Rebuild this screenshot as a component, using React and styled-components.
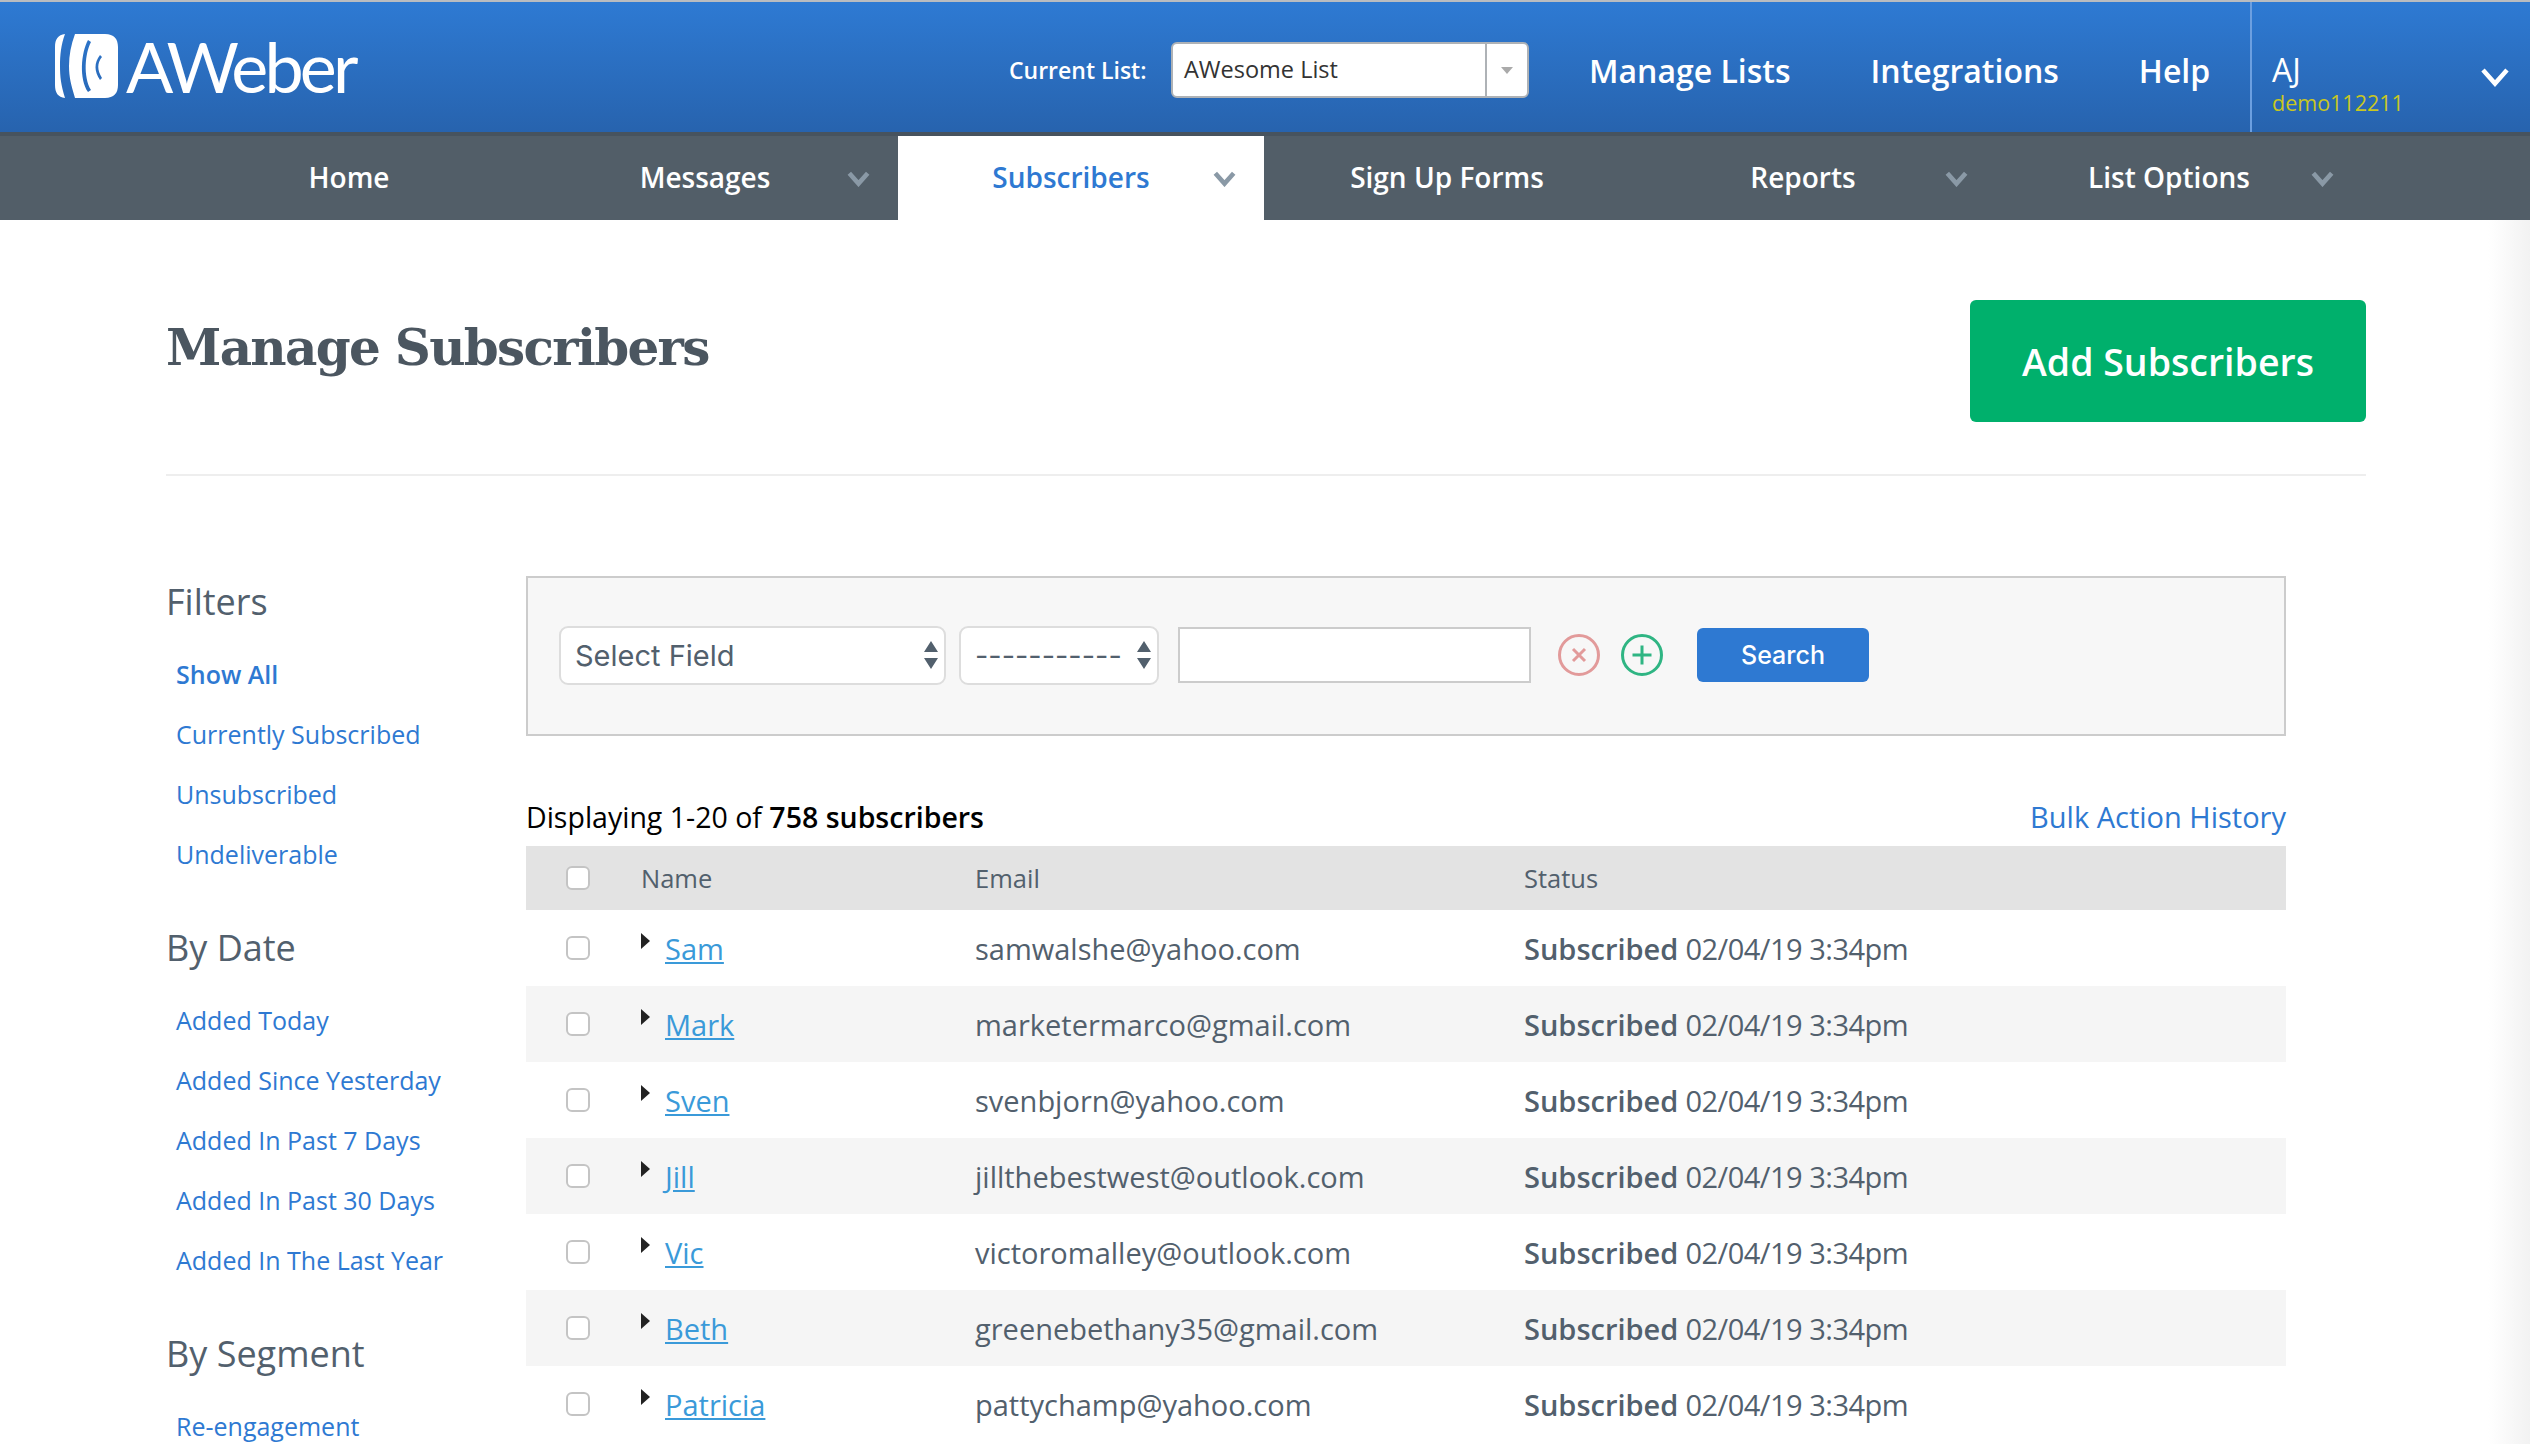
import React from 'react';
import styled, { createGlobalStyle } from 'styled-components';

const GlobalStyle = createGlobalStyle`
  html, body {
    margin: 0;
    padding: 0;
    height: 1444px;
    overflow: hidden;
    background: #fff;
  }
  body {
    font-family: 'Open Sans', 'Noto Sans', sans-serif;
    font-stretch: 88%;
  }
`;

const filterLinks = ['Show All', 'Currently Subscribed', 'Unsubscribed', 'Undeliverable'];
const dateLinks = ['Added Today', 'Added Since Yesterday', 'Added In Past 7 Days', 'Added In Past 30 Days', 'Added In The Last Year'];
const navItems = [
  { id: 1, label: 'Home' },
  { id: 2, label: 'Messages', menu: true },
  { id: 3, label: 'Subscribers', menu: true, active: true },
  { id: 4, label: 'Sign Up Forms' },
  { id: 5, label: 'Reports', menu: true },
  { id: 6, label: 'List Options', menu: true },
];
const subscribers = [
  { id: 1, name: 'Sam', email: 'samwalshe@yahoo.com' },
  { id: 2, name: 'Mark', email: 'marketermarco@gmail.com' },
  { id: 3, name: 'Sven', email: 'svenbjorn@yahoo.com' },
  { id: 4, name: 'Jill', email: 'jillthebestwest@outlook.com' },
  { id: 5, name: 'Vic', email: 'victoromalley@outlook.com' },
  { id: 6, name: 'Beth', email: 'greenebethany35@gmail.com' },
  { id: 7, name: 'Patricia', email: 'pattychamp@yahoo.com' },
];

function Chevron({ width = 23, color = '#8a99a6', stroke = 4 }) {
  return (
    <svg width={width} height={width * 0.7} viewBox="0 0 20 14" fill="none">
      <path d="M2 2 L10 11 L18 2" stroke={color} strokeWidth={stroke} />
    </svg>
  );
}

function Arrows() {
  return (
    <svg width="14" height="28" viewBox="0 0 14 28">
      <path d="M7 0 L14 11 L0 11 Z M7 28 L14 17 L0 17 Z" fill="#52606d" />
    </svg>
  );
}

export default function App() {
  return (
    <Page>
      <GlobalStyle />
      <Header>
        <Logo>
          <svg width="64" height="66" viewBox="0 0 64 66">
            <path d="M10 1 C3 2 0 6 0 14 L0 52 C0 60 3 64 10 65 C6 52 5 44 5 33 C5 22 6 12 10 1 Z" fill="#fff" />
            <path
              fillRule="evenodd"
              fill="#fff"
              d="M20 1 L50 1 C59 1 63 6 63 14 L63 52 C63 60 59 65 50 65 L20 65 C16 52 14 44 14 33 C14 22 16 12 20 1 Z M33 7 C26 20 24 46 33 59 L36 57 C28 44 30 20 36 9 Z M45 22 C39 30 39 38 45 47 L47 45 C42 37 42 30 47 24 Z"
            />
          </svg>
          <LogoText>AWeber</LogoText>
        </Logo>
        <ListLabel>Current List:</ListLabel>
        <ListSelect>
          <ListValue>AWesome List</ListValue>
          <ListCaret><i /></ListCaret>
        </ListSelect>
        <TopLinks>
          <TopLink>Manage Lists</TopLink>
          <TopLink>Integrations</TopLink>
          <TopLink>Help</TopLink>
        </TopLinks>
        <Account>
          <AccountText>
            <AccountName>AJ</AccountName>
            <AccountId>demo112211</AccountId>
          </AccountText>
          <AccountChevron>
            <Chevron width={30} color="#fff" stroke={3} />
          </AccountChevron>
        </Account>
      </Header>

      <NavBar>
        {navItems.map(item => (
          <NavItem key={item.id} $active={item.active} $menu={item.menu}>
            {item.label}
            {item.menu && (
              <NavChevron>
                <Chevron />
              </NavChevron>
            )}
          </NavItem>
        ))}
      </NavBar>

      <Content>
        <TitleRow>
          <Title>Manage Subscribers</Title>
          <AddButton>Add Subscribers</AddButton>
        </TitleRow>

        <Columns>
          <Sidebar>
            <SideHeading>Filters</SideHeading>
            <SideList>
              {filterLinks.map((link, i) => (
                <SideLink key={link} $current={i === 0}>{link}</SideLink>
              ))}
            </SideList>
            <SideHeading>By Date</SideHeading>
            <SideList>
              {dateLinks.map(link => (
                <SideLink key={link}>{link}</SideLink>
              ))}
            </SideList>
            <SideHeading>By Segment</SideHeading>
            <SideList>
              <SideLink>Re-engagement</SideLink>
            </SideList>
          </Sidebar>

          <Main>
            <SearchBox>
              <FieldSelect $width={387}>
                Select Field
                <Arrows />
              </FieldSelect>
              <FieldSelect $width={200}>
                <Dashes>-----------</Dashes>
                <Arrows />
              </FieldSelect>
              <SearchInput />
              <RoundIcon viewBox="0 0 42 42" $gap={27}>
                <circle cx="21" cy="21" r="19.5" fill="none" stroke="#e29a9a" strokeWidth="3" />
                <path d="M15 15 L27 27 M27 15 L15 27" stroke="#e29a9a" strokeWidth="3" />
              </RoundIcon>
              <RoundIcon viewBox="0 0 42 42" $gap={21}>
                <circle cx="21" cy="21" r="19.5" fill="none" stroke="#2fb583" strokeWidth="3" />
                <path d="M21 11.5 L21 30.5 M11.5 21 L30.5 21" stroke="#2fb583" strokeWidth="3" />
              </RoundIcon>
              <SearchButton>Search</SearchButton>
            </SearchBox>

            <ListHead>
              <span>
                Displaying 1-20 of <b>758 subscribers</b>
              </span>
              <BulkLink>Bulk Action History</BulkLink>
            </ListHead>

            <TableHead>
              <CheckCell><CheckBox /></CheckCell>
              <NameCell>Name</NameCell>
              <EmailCell>Email</EmailCell>
              <div>Status</div>
            </TableHead>
            {subscribers.map(sub => (
              <Row key={sub.id}>
                <CheckCell><CheckBox /></CheckCell>
                <NameCell>
                  <Expander />
                  <NameLink>{sub.name}</NameLink>
                </NameCell>
                <EmailCell>{sub.email}</EmailCell>
                <StatusCell>
                  <b>Subscribed</b> 02/04/19 3:34pm
                </StatusCell>
              </Row>
            ))}
          </Main>
        </Columns>
      </Content>
    </Page>
  );
}

const Page = styled.div`
  width: 2530px;
  height: 1444px;
  overflow: hidden;
  border-top: 2px solid #b9bcc0;
  box-sizing: border-box;
`;

const Header = styled.header`
  display: flex;
  align-items: center;
  box-sizing: content-box;
  height: 124px;
  padding: 6px 0 0 55px;
  background: linear-gradient(#2e7ad3, #2763ae);
  border-bottom: 4px solid #47535e;
  color: #fff;
`;

const Logo = styled.div`
  flex-shrink: 0;
  display: flex;
  align-items: center;
  gap: 7px;
  width: 954px;
  margin-top: -9px;
`;

const LogoText = styled.span`
  font-family: 'Lato', sans-serif;
  font-size: 70px;
  line-height: 66px;
  letter-spacing: -3.8px;
  color: #fff;
`;

const ListLabel = styled.div`
  flex-shrink: 0;
  width: 162px;
  font-size: 23px;
  font-weight: 600;
`;

const ListSelect = styled.div`
  flex-shrink: 0;
  display: flex;
  box-sizing: border-box;
  width: 358px;
  height: 56px;
  background: #fff;
  border: 2px solid #aeb2b6;
  border-radius: 6px;
`;

const ListValue = styled.div`
  flex: 1;
  padding-left: 11px;
  line-height: 50px;
  font-size: 23.5px;
  color: #333;
`;

const ListCaret = styled.div`
  display: flex;
  align-items: center;
  justify-content: center;
  width: 40px;
  border-left: 2px solid #aeb2b6;

  i {
    border-left: 6px solid transparent;
    border-right: 6px solid transparent;
    border-top: 7px solid #aaa;
  }
`;

const TopLinks = styled.nav`
  flex-shrink: 0;
  display: flex;
  gap: 80px;
  width: 721px;
  padding-left: 60px;
  box-sizing: border-box;
`;

const TopLink = styled.a`
  font-size: 32px;
  font-weight: 600;
  white-space: nowrap;
`;

const Account = styled.div`
  flex-shrink: 0;
  display: flex;
  align-items: center;
  justify-content: space-between;
  box-sizing: border-box;
  width: 280px;
  height: 130px;
  margin-top: -6px;
  padding: 0 20px;
  border-left: 2px solid #6c9fe0;
`;

const AccountText = styled.div`
  padding-top: 36px;
`;

const AccountName = styled.div`
  font-size: 32px;
  line-height: 36px;
`;

const AccountId = styled.div`
  font-size: 21.5px;
  line-height: 30px;
  color: #c9c71f;
`;

const AccountChevron = styled.span`
  display: flex;
  margin-top: 20px;
`;

const NavBar = styled.nav`
  display: flex;
  justify-content: center;
  height: 84px;
  padding-right: 2px;
  background: #525e68;
`;

const NavItem = styled.a`
  position: relative;
  display: flex;
  align-items: center;
  justify-content: center;
  box-sizing: border-box;
  width: 366px;
  padding-right: ${p => (p.$menu ? '20px' : '0')};
  padding-bottom: 2px;
  font-size: 28px;
  font-weight: 600;
  color: ${p => (p.$active ? '#2e79d2' : '#fff')};
  background: ${p => (p.$active ? '#fff' : 'transparent')};
`;

const NavChevron = styled.span`
  position: absolute;
  left: 315px;
  top: 35px;
  display: flex;
`;

const Content = styled.main`
  height: 1224px;
  padding: 0 164px 0 166px;
  background: linear-gradient(90deg, #fff 2488px, #f2f2f2 2530px);
`;

const TitleRow = styled.div`
  display: flex;
  justify-content: space-between;
  height: 256px;
  padding-top: 80px;
  box-sizing: border-box;
  border-bottom: 2px solid #eeeeee;
`;

const Title = styled.h1`
  margin: 0;
  padding-top: 18px;
  font-family: 'DejaVu Serif', serif;
  font-stretch: normal;
  font-size: 50px;
  font-weight: 700;
  letter-spacing: -1.7px;
  color: #4b5660;
`;

const AddButton = styled.button`
  width: 396px;
  height: 122px;
  border: 0;
  border-radius: 6px;
  background: #00b06c;
  color: #fff;
  font-family: inherit;
  font-stretch: inherit;
  font-size: 37.5px;
  font-weight: 600;
`;

const Columns = styled.div`
  display: flex;
`;

const Sidebar = styled.aside`
  width: 360px;
  padding-top: 99px;
`;

const SideHeading = styled.h3`
  margin: 0;
  height: 54px;
  font-size: 36px;
  line-height: 54px;
  font-weight: 400;
  color: #52606d;
`;

const SideList = styled.div`
  display: flex;
  flex-direction: column;
  padding: 15px 0 37px 10px;
`;

const SideLink = styled.a`
  height: 60px;
  line-height: 60px;
  font-size: 25px;
  font-weight: ${p => (p.$current ? 600 : 400)};
  color: #2e79d2;
`;

const Main = styled.section`
  width: 1760px;
  padding-top: 100px;
`;

const SearchBox = styled.div`
  display: flex;
  align-items: center;
  box-sizing: border-box;
  height: 160px;
  padding: 0 0 2px 31px;
  background: #f7f7f7;
  border: 2px solid #cccccc;
`;

const FieldSelect = styled.div`
  display: flex;
  align-items: center;
  justify-content: space-between;
  box-sizing: border-box;
  width: ${p => p.$width}px;
  height: 59px;
  margin-right: 13px;
  padding: 0 6px 0 14px;
  background: #fff;
  border: 2px solid #dddddd;
  border-radius: 9px;
  font-family: 'Inter', sans-serif;
  font-stretch: normal;
  font-size: 29px;
  color: #52606d;
`;

const Dashes = styled.span`
  white-space: nowrap;
`;

const SearchInput = styled.div`
  box-sizing: border-box;
  width: 353px;
  height: 56px;
  margin-left: 6px;
  background: #fff;
  border: 2px solid #cccccc;
`;

const RoundIcon = styled.svg`
  width: 42px;
  height: 42px;
  margin-left: ${p => p.$gap}px;
`;

const SearchButton = styled.button`
  width: 172px;
  height: 54px;
  margin-left: 34px;
  border: 0;
  border-radius: 6px;
  background: #2e79d2;
  color: #fff;
  font-family: 'Inter', sans-serif;
  font-size: 25px;
  font-weight: 500;
`;

const ListHead = styled.div`
  display: flex;
  align-items: center;
  justify-content: space-between;
  height: 110px;
  padding-top: 51px;
  box-sizing: border-box;
  font-size: 28.5px;
  color: #000;

  b {
    font-weight: 600;
  }
`;

const BulkLink = styled.a`
  font-size: 29px;
  color: #2e79d2;
`;

const TableHead = styled.div`
  display: flex;
  align-items: center;
  height: 64px;
  background: #e3e3e3;
  font-size: 25.5px;
  color: #52606d;
`;

const Row = styled.div`
  display: flex;
  align-items: center;
  height: 76px;
  font-size: 29px;
  color: #52606d;

  &:nth-of-type(odd) {
    background: #f5f5f5;
  }
`;

const StatusCell = styled.div`
  letter-spacing: -0.5px;

  b {
    font-weight: 600;
    letter-spacing: 0;
  }
`;

const CheckCell = styled.div`
  display: flex;
  width: 115px;
  padding-left: 40px;
  box-sizing: border-box;
`;

const CheckBox = styled.span`
  box-sizing: border-box;
  width: 24px;
  height: 24px;
  background: #fff;
  border: 2px solid #c4c4c4;
  border-radius: 6px;
`;

const NameCell = styled.div`
  display: flex;
  align-items: center;
  width: 334px;
`;

const EmailCell = styled.div`
  width: 549px;
`;

const Expander = styled.i`
  width: 0;
  height: 0;
  margin: 0 15px 14px 0;
  border-top: 8px solid transparent;
  border-bottom: 8px solid transparent;
  border-left: 9px solid #222;
`;

const NameLink = styled.a`
  color: #3a9ad9;
  text-decoration: underline;
`;
